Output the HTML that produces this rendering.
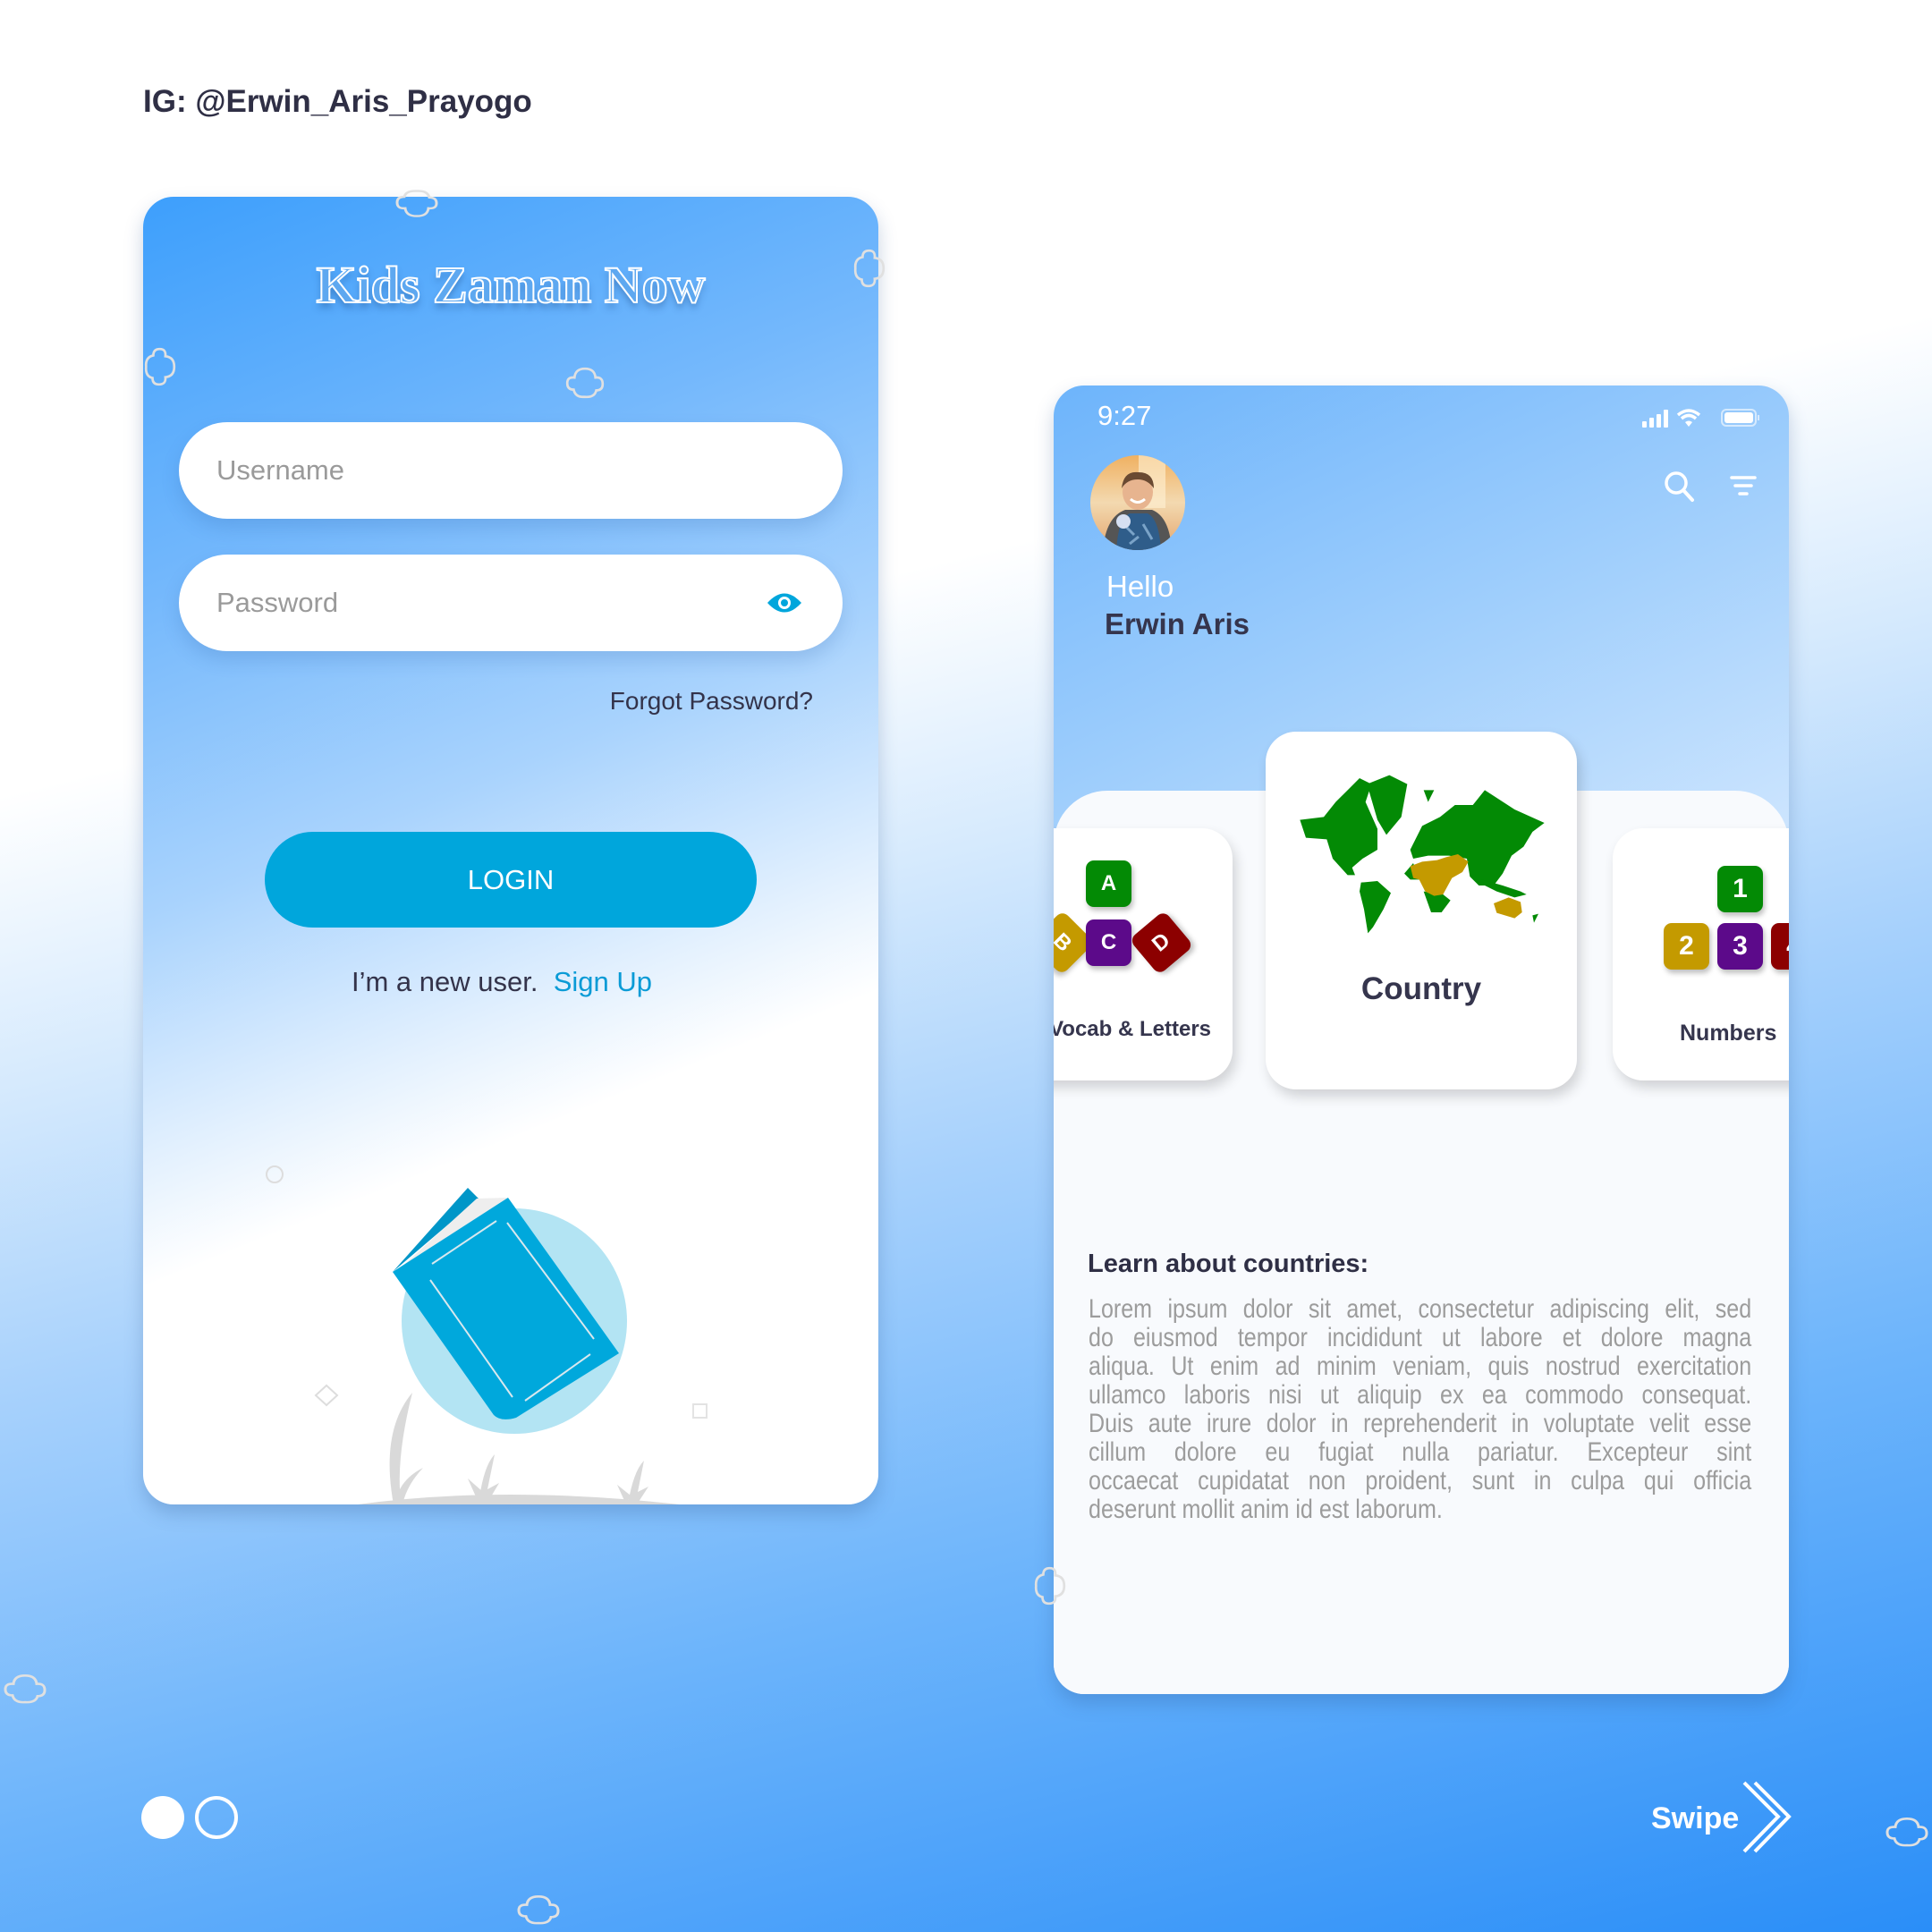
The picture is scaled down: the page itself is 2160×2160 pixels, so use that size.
<!DOCTYPE html>
<html><head><meta charset="utf-8">
<style>
*{margin:0;padding:0;box-sizing:border-box}
body{width:2160px;height:2160px;position:relative;overflow:hidden;font-family:"Liberation Sans",sans-serif;
background:linear-gradient(166deg,#ffffff 0%,#ffffff 33%,#d6eafd 45%,#a7d1fc 58%,#6cb4fb 76%,#2a8ef8 100%);}
.abs{position:absolute}
#ig{left:160px;top:94px;font-size:35px;font-weight:bold;color:#2f2f45}
#lc{left:160px;top:220px;width:822px;height:1462px;border-radius:34px;overflow:hidden;
background:linear-gradient(158deg,#3d9ffc 0%,#74b8fc 25%,#a9d3fd 45%,#e2f0fe 60%,#ffffff 68%,#ffffff 100%);
box-shadow:0 10px 20px rgba(40,80,140,.25)}
.title{left:0;width:822px;top:65px;text-align:center;font-family:"Liberation Serif",serif;font-size:58px;font-weight:bold;
color:#5ea8f0;-webkit-text-stroke:2px #fff;text-shadow:0 6px 8px rgba(20,60,120,.35)}
.field{left:40px;width:742px;height:108px;border-radius:54px;background:#fff;box-shadow:0 10px 20px rgba(40,90,160,.18);
font-size:31px;color:#9a9a9a;padding-left:42px;line-height:108px}
#login{left:136px;top:710px;width:550px;height:107px;border-radius:54px;background:#00a6dc;color:#fff;font-size:31px;text-align:center;line-height:107px}
#rc{left:1178px;top:431px;width:822px;height:1463px;border-radius:34px;overflow:hidden;background:#f8fafd;
box-shadow:0 10px 20px rgba(40,80,140,.25)}
#rhead{left:0;top:0;width:822px;height:520px;background:linear-gradient(155deg,#6db4fb 0%,#9dcdfc 50%,#cfe6fe 100%)}
#rwhite{left:0;top:453px;width:822px;height:1100px;background:#f8fafd;border-radius:60px 60px 0 0}
.card{background:#fff;border-radius:34px;box-shadow:4px 8px 14px rgba(0,0,0,.16)}
.blk{position:absolute;width:51px;height:52px;border-radius:9px;color:#fff;font-weight:bold;font-size:24px;text-align:center;line-height:52px;box-shadow:2px 4px 6px rgba(0,0,0,.25)}
.ptxt{width:872px;transform:scaleX(.85);transform-origin:0 0;font-size:29.5px;color:#9c9c9c;line-height:32px}
.ptxt div{text-align:justify;text-align-last:justify;white-space:nowrap}
</style></head><body>
<div id="ig" class="abs">IG: @Erwin_Aris_Prayogo</div>

<div id="lc" class="abs">
 <div class="abs title">Kids Zaman Now</div>
 <div class="abs field" style="top:252px">Username</div>
 <div class="abs field" style="top:400px">Password
   <svg class="abs" style="left:656px;top:39px" width="42" height="30" viewBox="0 0 42 30"><path d="M2 15 Q21 -6 40 15 Q21 36 2 15Z" fill="#00a6dc"/><circle cx="21" cy="15" r="7" fill="#fff"/><circle cx="21" cy="15" r="4" fill="#00a6dc"/></svg>
 </div>
 <div class="abs" style="right:73px;top:548px;font-size:28px;color:#33334a">Forgot Password?</div>
 <div id="login" class="abs">LOGIN</div>
 <div class="abs" style="left:0;width:802px;top:860px;text-align:center;font-size:31px;color:#33334a">I’m a new user.&nbsp; <span style="color:#0a9bd6">Sign Up</span></div>
 <svg class="abs" style="left:0;top:0" width="822" height="1462" viewBox="160 220 822 1462">
  <circle cx="307" cy="1313" r="9" fill="none" stroke="#ddd" stroke-width="2"/>
  <path d="M353 1560 L365 1549 L377 1560 L365 1571Z" fill="none" stroke="#ddd" stroke-width="2"/>
  <rect x="775" y="1570" width="15" height="15" fill="none" stroke="#e3e3e3" stroke-width="2"/>
  <circle cx="575" cy="1477" r="126" fill="#b3e4f3"/>
  <path d="M439 1422 L523 1328 L535 1340 Z" fill="#0096c8"/>
  <path d="M445 1420 L533 1340 L568 1339 L460 1418Z" fill="#eeeeee"/>
  <path d="M439 1422 L568 1339 L692 1513 L577 1585 Q560 1590 552 1582 Z" fill="#00a8dc"/>
  <path d="M483 1413 L555 1365 M567 1367 L664 1497 M660 1514 L587 1566 M481 1431 L573 1562" stroke="#d8e8ee" stroke-width="2" fill="none"/>
  <path d="M400 1682 Q560 1660 760 1682Z" fill="#d9d9d9"/>
  <path d="M440 1682 Q425 1600 461 1557 Q445 1620 447 1665 Q455 1650 473 1641 Q455 1660 450 1682Z" fill="#d9d9d9"/>
  <path d="M535 1682 Q540 1640 553 1626 L545 1665 L558 1658 L545 1680Z M523 1653 L540 1668 L535 1680Z" fill="#d9d9d9"/>
  <path d="M702 1682 Q708 1645 720 1633 L713 1668 L725 1662 L712 1682Z M690 1660 L705 1672 L700 1682Z" fill="#d9d9d9"/>
 </svg>
</div>

<div id="rc" class="abs">
 <div id="rhead" class="abs"></div>
 <div id="rwhite" class="abs"></div>
 <div class="abs" style="left:49px;top:16px;font-size:31px;color:#fff">9:27</div>
 <svg class="abs" style="left:658px;top:24px" width="140" height="26" viewBox="0 0 140 26">
  <rect x="0" y="16" width="5" height="7" rx="1" fill="#fff"/><rect x="8" y="12" width="5" height="11" rx="1" fill="#fff"/><rect x="16" y="8" width="5" height="15" rx="1" fill="#fff"/><rect x="24" y="3" width="5" height="20" rx="1" fill="#fff"/>
  <path d="M40 9 Q52 -1 64 9 M44 13 Q52 6 60 13" stroke="#fff" stroke-width="3.5" fill="none"/><path d="M48 17 L52 22 L56 17 Q52 14 48 17Z" fill="#fff"/>
  <rect x="89" y="3" width="38" height="18" rx="5" fill="none" stroke="rgba(255,255,255,.6)" stroke-width="2"/><rect x="92" y="6" width="32" height="12" rx="3" fill="#fff"/><rect x="129" y="9" width="2" height="6" fill="rgba(255,255,255,.6)"/>
 </svg>
 <svg class="abs" style="left:680px;top:94px" width="110" height="40" viewBox="0 0 110 40">
  <circle cx="16" cy="15" r="11" stroke="#fff" stroke-width="3.5" fill="none"/><path d="M24 23 L34 34" stroke="#fff" stroke-width="4" stroke-linecap="round"/>
  <path d="M78 9 H104 M82 18 H100 M87 27 H95" stroke="#fff" stroke-width="3.5" stroke-linecap="round"/>
 </svg>
 <svg class="abs" style="left:40px;top:77px" width="108" height="108" viewBox="0 0 108 108">
  <defs><clipPath id="av"><circle cx="54" cy="54" r="53"/></clipPath>
  <linearGradient id="avbg" x1="0" y1="0" x2="0" y2="1"><stop offset="0" stop-color="#f0b060"/><stop offset=".5" stop-color="#f3d9b0"/><stop offset="1" stop-color="#e3a56c"/></linearGradient></defs>
  <g clip-path="url(#av)">
   <rect width="108" height="108" fill="url(#avbg)"/>
   <rect x="55" y="0" width="30" height="60" fill="#fff2d6" opacity=".6"/>
   <path d="M15 108 Q18 70 40 62 L70 62 Q90 70 92 108Z" fill="#555"/>
   <path d="M30 108 Q32 72 45 66 L65 66 Q78 72 80 108Z" fill="#2f5d8a"/>
   <path d="M40 80 L50 90 M60 78 L70 95 M45 100 L55 92" stroke="#7aa3c8" stroke-width="3"/>
   <ellipse cx="54" cy="42" rx="17" ry="20" fill="#e7b48f"/>
   <path d="M36 38 Q38 18 55 20 Q72 20 72 38 Q65 28 54 28 Q42 28 36 38Z" fill="#6a4a32"/>
   <path d="M46 50 Q54 57 62 50" stroke="#fff" stroke-width="3" fill="none"/>
   <circle cx="38" cy="75" r="8" fill="#d6e0f2"/>
  </g>
 </svg>
 <div class="abs" style="left:59px;top:206px;font-size:33px;color:#fff">Hello</div>
 <div class="abs" style="left:57px;top:248px;font-size:33px;font-weight:bold;color:#35354d">Erwin Aris</div>

 <div class="abs card" style="left:-60px;top:495px;width:260px;height:282px"></div>
 <div class="blk" style="left:36px;top:531px;background:#038a05">A</div>
 <div class="blk" style="left:-16px;top:597px;background:#c49a00;transform:rotate(45deg)">B</div>
 <div class="blk" style="left:36px;top:597px;background:#5c0a8a">C</div>
 <div class="blk" style="left:95px;top:597px;background:#8c0000;transform:rotate(-40deg)">D</div>
 <div class="abs" style="right:646px;top:706px;font-size:24px;font-weight:bold;color:#35354d;white-space:nowrap">Vocab &amp; Letters</div>

 <div class="abs card" style="left:625px;top:495px;width:260px;height:282px"></div>
 <div class="blk" style="left:742px;top:537px;background:#038a05;font-size:30px">1</div>
 <div class="blk" style="left:682px;top:601px;background:#c49a00;font-size:30px">2</div>
 <div class="blk" style="left:742px;top:601px;background:#5c0a8a;font-size:30px">3</div>
 <div class="blk" style="left:802px;top:601px;background:#8c0000;font-size:30px">4</div>
 <div class="abs" style="left:700px;top:710px;font-size:25px;font-weight:bold;color:#35354d">Numbers</div>

 <div class="abs card" style="left:237px;top:387px;width:348px;height:400px"></div>
 <svg class="abs" style="left:262px;top:419px" width="300" height="210" viewBox="0 0 900 630">
  <g fill="#038a05">
   <path d="M40 200 L120 190 L160 140 L200 100 L240 60 L280 80 L260 140 L300 230 L300 300 L250 330 L215 360 L225 385 L200 385 L150 330 L130 265 L60 260Z"/>
   <path d="M265 80 L340 50 L400 80 L380 190 L330 250 L300 200Z"/>
   <path d="M245 410 L300 405 L345 445 L320 500 L285 560 L268 580 L255 500 L240 440Z"/>
   <path d="M410 300 L450 220 L510 190 L560 150 L620 150 L660 100 L760 165 L860 210 L820 240 L790 290 L750 320 L720 380 L690 420 L640 420 L610 390 L600 330 L540 320 L470 320 L420 330Z"/>
   <path d="M455 440 L520 450 L545 470 L515 510 L480 510Z"/>
   <path d="M650 400 L720 420 L780 440 L800 450 L760 460 L700 440 L660 420Z"/>
   <path d="M455 100 L490 100 L470 140Z M820 520 L840 515 L825 545Z M390 380 L420 345 L440 400 L410 400Z"/>
  </g>
  <g fill="#c49a00">
   <path d="M410 355 L450 340 L500 335 L530 325 L570 315 L605 340 L585 375 L550 395 L520 450 L490 455 L460 440 L440 400 L420 395Z"/>
   <path d="M690 480 L740 460 L780 475 L785 510 L760 530 L700 512Z"/>
  </g>
 </svg>
 <div class="abs" style="left:237px;top:655px;width:348px;text-align:center;font-size:35px;font-weight:bold;color:#35354d">Country</div>

 <div class="abs" style="left:38px;top:966px;font-size:29px;font-weight:bold;color:#2f2f45">Learn about countries:</div>
 <div class="abs ptxt" style="left:39px;top:1017px">
  <div>Lorem ipsum dolor sit amet, consectetur adipiscing elit, sed</div>
  <div>do eiusmod tempor incididunt ut labore et dolore magna</div>
  <div>aliqua. Ut enim ad minim veniam, quis nostrud exercitation</div>
  <div>ullamco laboris nisi ut aliquip ex ea commodo consequat.</div>
  <div>Duis aute irure dolor in reprehenderit in voluptate velit esse</div>
  <div>cillum dolore eu fugiat nulla pariatur. Excepteur sint</div>
  <div>occaecat cupidatat non proident, sunt in culpa qui officia</div>
  <div style="text-align-last:left">deserunt mollit anim id est laborum.</div>
 </div>
</div>

<svg class="abs" style="left:0;top:0" width="2160" height="2160" viewBox="0 0 2160 2160">
 <defs><path id="cl" d="M-14 4 Q-22 4 -22 -4 Q-22 -12 -13 -11 Q-12 -22 0 -22 Q12 -22 13 -11 Q22 -12 22 -3 Q22 5 14 5 Q12 14 0 13 Q-12 14 -14 4Z" fill="none" stroke="#e0e0e0" stroke-width="3"/></defs>
 <use href="#cl" transform="translate(466,224) rotate(180) scale(1,.8)"/>
 <use href="#cl" transform="translate(968,300) rotate(90) scale(.9)"/>
 <use href="#cl" transform="translate(175,410) rotate(90) scale(.9)"/>
 <use href="#cl" transform="translate(654,432) scale(.9)"/>
 <use href="#cl" transform="translate(1170,1773) rotate(90) scale(.9)"/>
 <use href="#cl" transform="translate(28,1892) scale(1,.85)"/>
 <use href="#cl" transform="translate(602,2139) scale(1,.85)"/>
 <use href="#cl" transform="translate(2132,2052) scale(1,.85)"/>
 <circle cx="182" cy="2032" r="24" fill="#fff"/>
 <circle cx="242" cy="2032" r="22" fill="none" stroke="#fff" stroke-width="4"/>
 <text x="1846" y="2044" font-family="Liberation Sans" font-weight="bold" font-size="34" fill="#fff">Swipe</text>
 <path d="M1950 1993 L1988 2031 L1950 2070 M1962 1993 L2000 2031 L1962 2070" stroke="#fff" stroke-width="4" fill="none"/>
</svg>
</body></html>
